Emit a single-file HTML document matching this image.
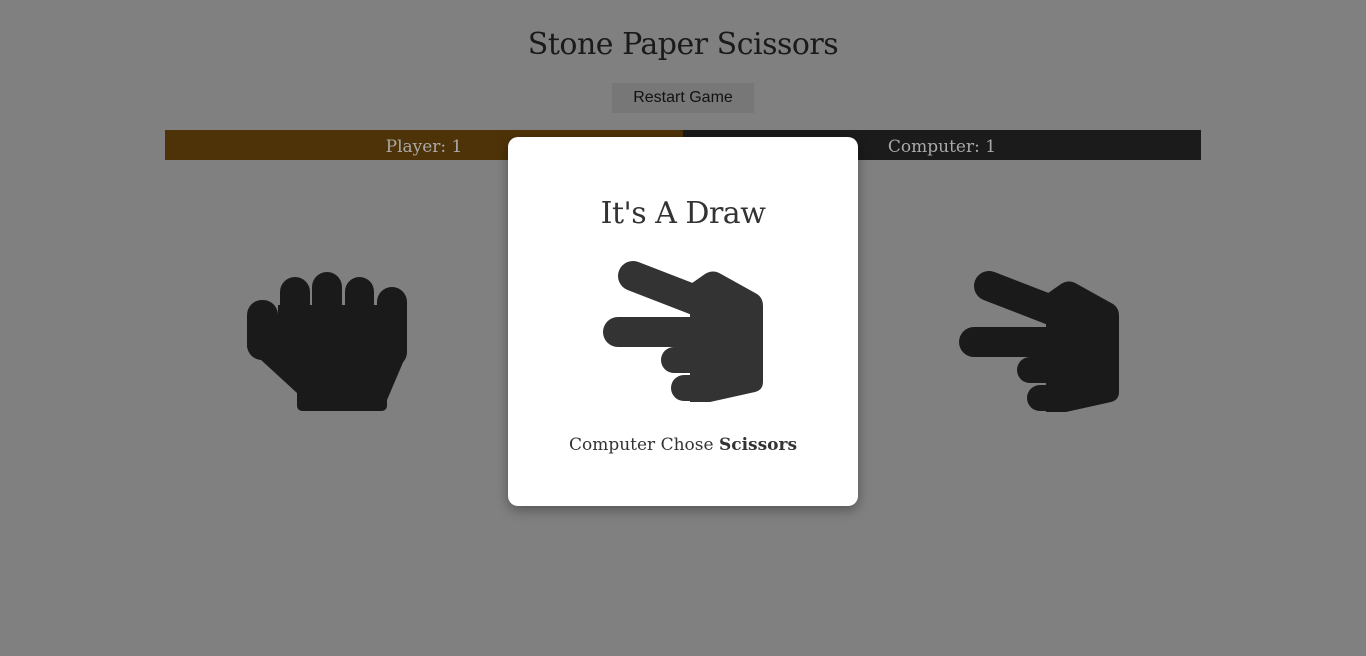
<!DOCTYPE html>
<html><head><meta charset="utf-8"><style>
body{margin:0;width:1366px;height:656px;background:#808080;position:relative;overflow:hidden;font-family:"DejaVu Serif","Liberation Serif",serif}
h1{position:absolute;top:27px;left:0;width:1366px;margin:0;text-align:center;font-size:30px;font-weight:normal;color:#1a1a1a;letter-spacing:-0.5px}
.btn{position:absolute;left:612px;top:83px;width:142px;height:30px;background:#777;color:#111;font:16px "Liberation Sans",sans-serif;text-align:center;line-height:30px}
.bar{position:absolute;top:130px;height:30px;color:#a9a9a9;font-size:17px;line-height:35px;text-align:center}
.modal{position:absolute;left:508px;top:137px;width:350px;height:369px;background:#fff;border-radius:10px;box-shadow:0 4px 12px rgba(0,0,0,.35)}
.modal h2{position:absolute;top:59px;width:100%;margin:0;text-align:center;font-size:30px;font-weight:normal;color:#333;letter-spacing:-0.5px}
.modal p{position:absolute;top:298px;width:100%;margin:0;text-align:center;font-size:17px;color:#333}
svg{position:absolute}
</style></head><body>
<h1>Stone Paper Scissors</h1>
<div class="btn">Restart Game</div>
<div class="bar" style="left:165px;width:518px;background:#4f3308">Player: 1</div>
<div class="bar" style="left:683px;width:518px;background:#1b1b1b">Computer: 1</div>
<svg style="left:240px;top:265px" width="175" height="150" viewBox="0 0 175 150">
<g fill="#1a1a1a">
<rect x="7" y="35" width="31" height="60" rx="15"/>
<rect x="40" y="12" width="30" height="80" rx="15"/>
<rect x="72" y="7" width="30" height="80" rx="15"/>
<rect x="105" y="12" width="29" height="80" rx="14.5"/>
<rect x="137" y="22" width="30" height="80" rx="15"/>
<path d="M7,55 L7,82 L57,128 L57,140 Q57,146 63,146 L141,146 Q147,146 147,140 L147,135 L167,88 L167,40 L38,40 L38,55 Z"/>
</g></svg>
<div class="modal"><h2>It's A Draw</h2><p>Computer Chose <b>Scissors</b></p></div>
<svg style="left:600px;top:258px" width="170" height="150" viewBox="0 0 170 150">
<g fill="#333" stroke="#333" stroke-linecap="round">
<line x1="33" y1="18" x2="95" y2="42" stroke-width="30"/>
<line x1="18" y1="74" x2="90" y2="74" stroke-width="30"/>
<line x1="74" y1="102" x2="95" y2="102" stroke-width="26"/>
<line x1="84" y1="130" x2="95" y2="130" stroke-width="26"/>
<path stroke="none" d="M85,30 L105,16 Q113,11 121,16 L157,36 Q163,40 163,48 L163,124 Q163,132 155,134 L110,144 L90,144 L90,30 Z"/>
</g></svg>
<svg style="left:956px;top:268px" width="170" height="150" viewBox="0 0 170 150">
<g fill="#1a1a1a" stroke="#1a1a1a" stroke-linecap="round">
<line x1="33" y1="18" x2="95" y2="42" stroke-width="30"/>
<line x1="18" y1="74" x2="90" y2="74" stroke-width="30"/>
<line x1="74" y1="102" x2="95" y2="102" stroke-width="26"/>
<line x1="84" y1="130" x2="95" y2="130" stroke-width="26"/>
<path stroke="none" d="M85,30 L105,16 Q113,11 121,16 L157,36 Q163,40 163,48 L163,124 Q163,132 155,134 L110,144 L90,144 L90,30 Z"/>
</g></svg>
</body></html>
